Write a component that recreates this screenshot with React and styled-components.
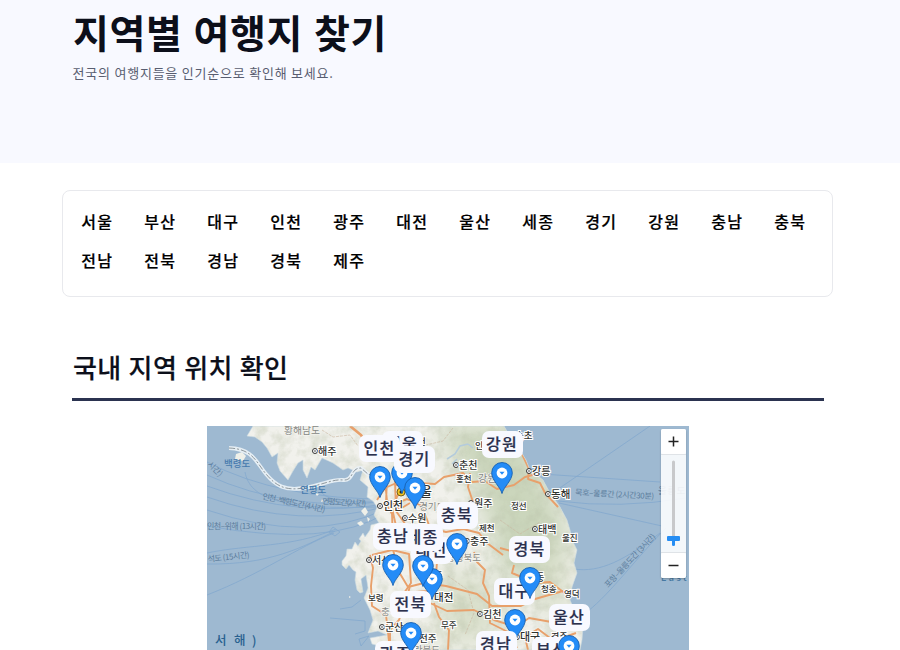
import React from "react";
import styled, { createGlobalStyle } from "styled-components";

const GlobalStyle = createGlobalStyle`
  * { box-sizing: border-box; }
  body {
    margin: 0;
    background: #fff;
    color: #0c0f1a;
    font-family: "Noto Sans CJK KR", sans-serif;
    overflow: hidden;
  }
`;

const Page = styled.div`
  width: 900px;
  height: 650px;
  overflow: hidden;
`;

const Hero = styled.header`
  height: 163px;
  padding: 3px 73px 0;
  background: #f8f9ff;
`;

const Title = styled.h1`
  margin: 0;
  font-size: 39px;
  line-height: 57px;
  font-weight: 700;
  letter-spacing: 0.6px;
  word-spacing: 1.6px;
  white-space: nowrap;
`;

const Subtitle = styled.p`
  margin: 3px 0 0 -0.5px;
  font-size: 13px;
  line-height: 20px;
  font-weight: 400;
  letter-spacing: 0.78px;
  color: #585d70;
`;

const RegionList = styled.nav`
  display: grid;
  grid-template-columns: repeat(12, 63px);
  grid-auto-rows: 39px;
  align-content: start;
  width: 771px;
  height: 107px;
  margin: 27px 0 0 62.4px;
  padding: 11px 0 0 17.8px;
  border: 1px solid #e8e9ed;
  border-radius: 8px;
`;

const RegionLink = styled.a`
  font-size: 16px;
  line-height: 39px;
  font-weight: 500;
  letter-spacing: 1.3px;
  color: #000;
  -webkit-text-stroke: 0.2px #000;
`;

const Section = styled.section`
  width: 752px;
  margin: 50px 0 0 72px;
`;

const SectionTitle = styled.h2`
  margin: 0;
  height: 54px;
  padding-left: 1px;
  border-bottom: 3px solid #2b3350;
  font-size: 26px;
  line-height: 39px;
  font-weight: 500;
  letter-spacing: 0.4px;
  word-spacing: 0.7px;
  -webkit-text-stroke: 0.2px #0c0f1a;
  white-space: nowrap;
`;

const MapFrame = styled.div`
  position: relative;
  width: 482px;
  height: 224px;
  margin: 25px 0 0 135px;
  overflow: hidden;
  background: #9eb9d1;
`;

const MapDrawing = styled.svg`
  display: block;
  font-family: "Noto Sans CJK KR", sans-serif;
`;

const Marker = styled.div`
  position: absolute;
  left: ${(p) => p.$x - 227.5}px;
  top: ${(p) => p.$y - 426}px;
  width: 41px;
  height: 63px;
  display: flex;
  flex-direction: column;
  align-items: center;
  justify-content: space-between;
`;

const MarkerLabel = styled.span`
  width: 41px;
  height: 27px;
  border-radius: 7px;
  background: #f8f9ff;
  color: #2b304d;
  font-size: 16px;
  line-height: 25px;
  font-weight: 500;
  letter-spacing: 1.2px;
  text-align: center;
  white-space: nowrap;
  -webkit-text-stroke: 0.2px #2b304d;
`;

const ZoomControl = styled.div`
  position: absolute;
  left: 454px;
  top: 3px;
  width: 25px;
  height: 149px;
  display: flex;
  flex-direction: column;
  border-radius: 2px;
  background: rgba(255, 255, 255, 0.88);
  box-shadow: 0 1px 2px rgba(0, 0, 0, 0.25);
`;

const ZoomButton = styled.button`
  display: grid;
  place-items: center;
  height: 25px;
  padding: 0;
  border: 0;
  border-radius: 2px;
  background: #fff;
`;

const ZoomTrack = styled.div`
  flex: 1;
  display: grid;
  place-items: center;
  border-top: 1px solid #dfe3e7;
  border-bottom: 1px solid #dfe3e7;
`;

const regions = ["서울", "부산", "대구", "인천", "광주", "대전", "울산", "세종", "경기", "강원", "충남", "충북", "전남", "전북", "경남", "경북", "제주"];

// Later markers are painted over earlier ones.
const markers = [
  ["서울", 402, 431],
  ["부산", 552, 637],
  ["대구", 514.5, 578],
  ["인천", 379.5, 435],
  ["광주", 395.5, 641],
  ["대전", 431.5, 537],
  ["울산", 569, 604],
  ["세종", 422.5, 524],
  ["경기", 414.5, 446],
  ["강원", 502, 431],
  ["충남", 393, 523],
  ["충북", 457, 502],
  ["전북", 410.5, 591],
  ["경남", 496, 631],
  ["경북", 529.5, 536],
];

const cities = [
  ["해주", 318, 455, 10, true], ["인천", 383, 510, 11, true], ["수원", 408, 522, 10, true],
  ["춘천", 459, 469, 10, true], ["강릉", 532, 475, 10, true], ["동해", 551, 498, 10.5, true],
  ["태백", 538, 533, 10, true], ["원주", 474, 507, 10, true], ["충주", 470, 545, 10, true],
  ["서산", 372, 564, 10, true], ["김천", 483, 618, 10, true], ["군산", 385, 631, 10, true],
  ["대구", 520, 641, 11, true], ["홍천", 456, 482, 8.5], ["정선", 511, 509, 8.5],
  ["제천", 479, 531, 8.5], ["울진", 562, 541, 8.5], ["보령", 368, 601, 8.5],
  ["대전", 434, 601, 10.5], ["무주", 441, 628, 8.5], ["전주", 419, 642, 9.5],
  ["안동", 526, 581, 10], ["청송", 541, 592, 8.5], ["영덕", 564, 597, 8.5],
  ["서울", 408, 496, 13], ["속초", 515, 439, 9.5], ["인제", 475, 449, 9], ["동두천", 401, 445, 9],
  ["경주", 551, 640, 9], ["청주", 425, 579, 9.5], ["서천", 381, 649, 8],
];

const provinces = [
  ["황해남도", 284, 434, 9.8], ["강원도", 478, 482, 10], ["경기도", 419, 510, 9.5],
  ["충청북도", 446, 561, 9.5], ["충청", 381, 615, 9.5], ["전라북도", 405, 653, 9.5],
];

const coast = "M253 426L247 436 255 437 262 442 267 448 272 457 278 453 277 463 280 471 288 480 293 471 298 463 303 460 303 470 307 478 311 467 315 470 322 458 333 463 343 470 348 468 357 472 363 470 360 480 368 487 367 497 373 501 377 507 374 515 379 523 371 525 370 530 365 537 363 533 359 539 361 541 358 546 355 542 352 549 347 549 346 556 342 561 342 565 346 569 349 565 353 570 356 572 355 580 357 590 360 593 363 592 361 579 366 575 368 588 364 598 370 610 373 620 368 633 378 631 387 635 370 638 372 644 383 647 379 650H580L582 640 583 627 588 618 578 615 573 607 570 600 572 587 577 573 574 563 577 550 572 540 570 530 567 520 560 507 550 493 543 480 530 470 526 460 520 450 512 440 504 426Z";
const metroRoads = "M377 500l8-12 9-4 9 3 16-4 16 1 9-7 19-4 9 9 13-1 12 8 17-4 11-8 15-4 8-12-7-8M385 481l2 20 10 2 10-4 15 7 8 22 16 4 17-3 16 4 8 10 16 12M387 478l-1 25 6 11 1 28M395 481l1 30 12 17M400 490l-8 18 4 18M390 500l10 9 10-6";

function MapBase() {
  return (
    <MapDrawing width="482" height="224" viewBox="207 426 482 224">
      <defs>
        <clipPath id="land"><path d={coast} /></clipPath>
        <filter id="relief" x="0" y="0" width="100%" height="100%">
          <feTurbulence type="fractalNoise" baseFrequency=".09" numOctaves="4" seed="8" />
          <feColorMatrix values="0 0 0 0 .49  0 0 0 0 .54  0 0 0 0 .40  2.4 0 0 0 -.95" />
        </filter>
        <filter id="soft"><feGaussianBlur stdDeviation="13" /></filter>
      </defs>
      <g fill="none" stroke="#83a8ce" strokeWidth=".8">
        <path d="M207 462Q280 500 390 499M207 475Q290 513 390 501M207 486Q300 520 390 503M207 497Q300 530 388 506M207 510Q310 545 386 509M207 526Q330 548 386 513M207 553C250 544 290 548 336 529M207 564C270 565 303 547 335 531M207 595C261 574 298 547 334 533M245 472C250 499 282 510 376 507M320 485Q316 503 372 502" />
        <path d="M542 474L660 482M551 494L650 426M558 501Q620 509 686 498M559 503L662 526M574 569C600 573 625 560 660 533M588 611C610 594 638 556 666 528" />
        <path d="M329 532l4-5 7 5-5 4zM330 618l35 3v10l-10 3M340 609l12-2 9-7M361 646l8-10-10 3z" />
      </g>
      <g clipPath="url(#land)">
        <path fill="#f1f1ec" d="M207 426h400v224H207z" />
        <g filter="url(#soft)">
          <path fill="#cbd6bc" d="M435 426h85l45 90 5 60-30 20-40-25-20-70z" />
          <path fill="#d9dfcb" d="M435 570l55 5 15 60-65 15zM540 550l30 10v50l-30 8z" />
        </g>
        <path filter="url(#relief)" opacity=".38" d="M207 426h400v224H207z" />
        <path fill="#c9d7df" opacity=".8" d="M404 489l7 8 9-3-1 4-12 3z" />
        <path d="M447 459l8-5 5-8 8-2M468 444l5 4M457 459l-5 5" fill="none" stroke="#b4cbdc" strokeWidth="1.5" />
        <g fill="none" stroke="#c9b6a0" strokeWidth=".6" strokeDasharray="3 1">
          <path d="M322 430l11 7 17-2 8 11M408 435l18 10 17-4 10-13M415 530l14 7 4 20M448 576l20 14 6 23-9 22M500 520l20 14 20-12" />
        </g>
        <g fill="none" stroke="#e8a06b" strokeWidth="1.9" strokeLinejoin="round">
          <path strokeWidth="2.6" d="M350 426l11 9 5 8" />
          <path d={metroRoads} />
          <path d="M522 454l7 15-1 10 12 4 5 10 13 14M470 473l-2 14 6 18-3 15-26 5M370 555l3 13-2 18 1 20 14 9 4 35M372 555l20-5 17 4 2 29-7 10 24-2 8-17 2-23 16-10" />
          <path d="M392 546l7 26 9 15 16-4 22 3 31 8 15 12h29l14-7 28-8M410 586l-5 18-6 16-9 10v20M434 603l5 14 10 13-1 20M474 552l3 10 8 8-2 13 6 13 1 27 18 9 9 16M430 603l17 8 27-1 20 10 19 6M514 565l-2 8 24 10 14-1 12 9 5 4M510 631l19-13 28 5 18-3M528 650l-3-13 13-8 16 12 22-8M417 648l19 2M500 548l11 3" />
        </g>
      </g>
      <path d={coast} fill="none" stroke="#cbdae1" strokeWidth=".6" />
      <g fill="#eff0e9">
        <path d="M236 454l6-2 4 4-3 5-8-2zM361 511l4-4 3 5-3 4zM357 523l4-2 3 3-4 2zM315 493l4 1-2 2zM322 499l2 2-3 1zM367 517l3 2-2 3zM349 596l2 1-2 1z" />
      </g>
      <path d="M229 448C253 449 256 462 266 474S285 491 304 488 332 479 343 480 350 468 361 468L369 475" fill="none" stroke="#e9f0f5" strokeWidth="3.8" opacity=".95" />
      <path d="M229 448C253 449 256 462 266 474S285 491 304 488 332 479 343 480 350 468 361 468L369 475L380 466" fill="none" stroke="#858d92" strokeWidth=".9" strokeDasharray="6 2 2 2" />
      <g fill="#5c7d9d" fontSize="8">
        <text x="224" y="467" fontSize="9.5" fontWeight="500" fill="#467aad">백령도</text>
        <text x="300" y="493" fontSize="9.5" fontWeight="500" fill="#467aad">연평도</text>
        <text transform="translate(262 499) rotate(12)" textLength="64">인천–백령도간 (4시간)</text>
        <text transform="translate(322 504) rotate(3)" textLength="44">연평도간(2시간)</text>
        <text x="207" y="529" textLength="59">인천–위해 (13시간)</text>
        <text transform="translate(208 562) rotate(-6)" textLength="42">석도 (15시간)</text>
        <text transform="translate(207 465) rotate(44)">시간)</text>
        <text transform="translate(575 495) rotate(3)" textLength="79">묵호–울릉간 (2시간30분)</text>
        <text transform="translate(608 588) rotate(-47)" textLength="70">포항–울릉도간 (3시간)</text>
        <g fontSize="12.5" fontWeight="500" fill="#29618f">
          <text x="215" y="645">서</text>
          <text x="234" y="645">해</text>
          <text x="252" y="645">)</text>
        </g>
        <text x="661" y="581" fontSize="9" fontWeight="500" letterSpacing="2.4" fill="#477aa3">East</text>
        <text x="658" y="494" fontSize="9.5" letterSpacing="0.5">울릉도</text>
      </g>
      <g fill="#858784" stroke="#f4f4ef" strokeWidth="1.5" paintOrder="stroke">
        {provinces.map(([name, x, y, size]) => <text key={name} x={x} y={y} fontSize={size}>{name}</text>)}
      </g>
      {cities.map(([name, x, y, size, dot]) => (
        <g key={name + x}>
          {dot && <circle cx={x - 3} cy={y - 4} r="2.5" fill="#fff" stroke="#333" strokeWidth="1" />}
          {dot && <circle cx={x - 3} cy={y - 4} r=".8" fill="#333" />}
          <text x={x} y={y} fontSize={size} fontWeight="500" fill="#30322f" stroke="#fff" strokeWidth="2" paintOrder="stroke">{name}</text>
        </g>
      ))}
      <circle cx="401" cy="492" r="4" fill="#f1c522" stroke="#766018" />
      <circle cx="401" cy="492" r="1.5" fill="#222" />
    </MapDrawing>
  );
}

function Pin() {
  return (
    <svg width="22" height="32" viewBox="0 0 22 32">
      <path d="M11 31.5C9.5 25 .7 18.5.7 10.8A10.3 10.3 0 0 1 21.3 10.8C21.3 18.5 12.5 25 11 31.5Z" fill="#248cf7" stroke="#1560b0" strokeWidth=".9" />
      <circle cx="11" cy="11" r="5.4" fill="#fff" />
      <path d="M8.4 9.8h5.2L11 12.8z" fill="#248cf7" />
    </svg>
  );
}

export default function App() {
  return (
    <Page>
      <GlobalStyle />
      <Hero>
        <Title>지역별 여행지 찾기</Title>
        <Subtitle>전국의 여행지들을 인기순으로 확인해 보세요.</Subtitle>
      </Hero>
      <RegionList>
        {regions.map((name) => <RegionLink key={name}>{name}</RegionLink>)}
      </RegionList>
      <Section>
        <SectionTitle>국내 지역 위치 확인</SectionTitle>
        <MapFrame>
          <MapBase />
          {markers.map(([name, x, y]) => (
            <Marker key={name} $x={x} $y={y}>
              <MarkerLabel>{name}</MarkerLabel>
              <Pin />
            </Marker>
          ))}
          <ZoomControl>
            <ZoomButton aria-label="확대">
              <svg width="11" height="11"><path d="M5.5 .5v10M.5 5.5h10" stroke="#222" strokeWidth="1.5" /></svg>
            </ZoomButton>
            <ZoomTrack>
              <svg width="25" height="97">
                <path d="M12.5 7v77" stroke="#c8c9cb" strokeWidth="3" strokeLinecap="round" />
                <path d="M7 81h11q1 0 1 1v3q0 1-1 1h-4v4q0 1-1.5 1T11 90v-4H7q-1 0-1-1v-3q0-1 1-1Z" fill="#258df3" />
              </svg>
            </ZoomTrack>
            <ZoomButton aria-label="축소">
              <svg width="11" height="11"><path d="M.5 5.5h10" stroke="#222" strokeWidth="1.5" /></svg>
            </ZoomButton>
          </ZoomControl>
        </MapFrame>
      </Section>
    </Page>
  );
}
